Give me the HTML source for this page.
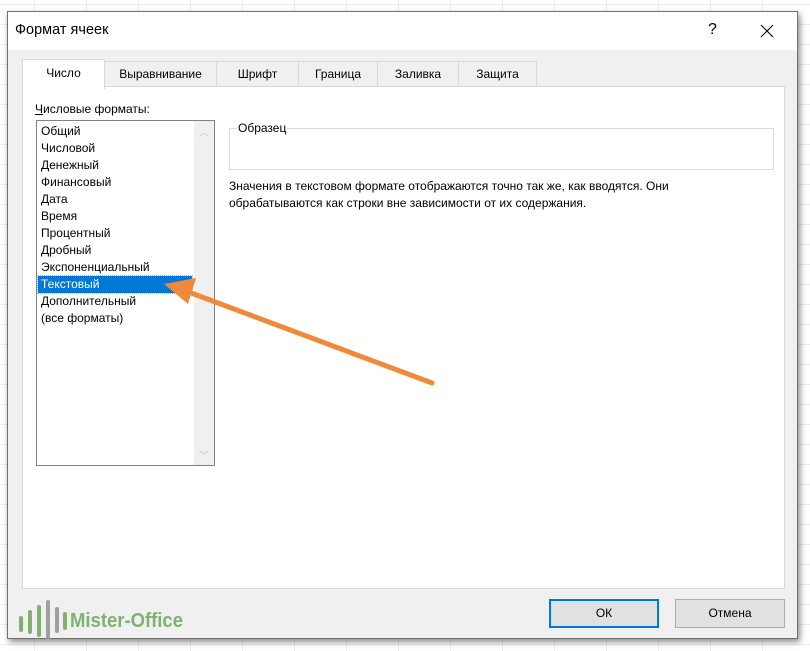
<!DOCTYPE html>
<html><head><meta charset="utf-8"><style>
*{margin:0;padding:0;box-sizing:border-box}
body{width:810px;height:651px;background:#fff;position:relative;overflow:hidden;font-family:"Liberation Sans",sans-serif;font-size:12px;color:#000}
.grid{position:absolute;inset:0;background-image:linear-gradient(90deg,#ececec 1px,transparent 1px),linear-gradient(#ececec 1px,transparent 1px);background-size:52px 20px;background-position:-18px 4px}
.dlg{position:absolute;left:7px;top:11px;width:791px;height:628px;background:#f0f0f0;border:1px solid #707070;box-shadow:2px 3px 6px rgba(0,0,0,.45)}
.title{position:absolute;left:0;top:0;right:0;height:38px;background:#fff}
.title .t{position:absolute;left:7px;top:10px;font-size:14.5px}
.title .q{position:absolute;left:700px;top:9px;font-size:16px}
.tab{position:absolute;top:49px;height:26px;border:1px solid #d9d9d9;border-bottom:none;background:#f0f0f0;text-align:center;line-height:24px;font-size:12px}
.tab.a{top:47px;height:30px;background:#fff;z-index:2;line-height:26px}
.panel{position:absolute;left:14px;top:74px;width:763px;height:503px;background:#fff;border:1px solid #d9d9d9}
.lbl{position:absolute;left:12px;top:15px}
.list{position:absolute;left:13px;top:33px;width:179px;height:346px;border:1px solid #828282;background:#fff}
.list .it{position:absolute;left:4px;line-height:17px}
.sel{position:absolute;left:1px;top:155px;width:154px;height:17px;background:#0078d7;outline:1px dotted #f5a04a;color:#fff;padding-left:3px;line-height:17px}
.sb{position:absolute;right:0;top:0;width:20px;height:344px;background:#f0f0f0}
.fs{position:absolute;left:206px;top:41px;width:545px;height:42px;border:1px solid #dcdcdc}
.fs span{position:absolute;left:7px;top:-8px;background:#fff;padding:0 1px}
.desc{position:absolute;left:206px;top:91px;line-height:17px}
.btn{position:absolute;top:587px;width:110px;height:29px;border:1px solid #adadad;background:#e1e1e1;text-align:center;line-height:27px}
.btn.ok{border:2px solid #0078d7;line-height:25px}
</style></head><body>
<div class="grid"></div>
<div class="dlg">
 <div class="title"><span class="t">Формат ячеек</span><span class="q">?</span>
  <svg style="position:absolute;left:752px;top:12px" width="14" height="14"><path d="M1 1L13 13M13 1L1 13" stroke="#000" stroke-width="1.1"/></svg></div>
 <div class="tab a" style="left:14px;width:83px">Число</div>
 <div class="tab" style="left:96px;width:113px">Выравнивание</div>
 <div class="tab" style="left:208px;width:83px">Шрифт</div>
 <div class="tab" style="left:290px;width:80px">Граница</div>
 <div class="tab" style="left:369px;width:82px">Заливка</div>
 <div class="tab" style="left:450px;width:79px">Защита</div>
 <div class="panel">
  <div class="lbl"><u>Ч</u>исловые форматы:</div>
  <div class="list">
   <div class="it" style="top:2px">Общий</div>
   <div class="it" style="top:19px">Числовой</div>
   <div class="it" style="top:36px">Денежный</div>
   <div class="it" style="top:53px">Финансовый</div>
   <div class="it" style="top:70px">Дата</div>
   <div class="it" style="top:87px">Время</div>
   <div class="it" style="top:104px">Процентный</div>
   <div class="it" style="top:121px">Дробный</div>
   <div class="it" style="top:138px">Экспоненциальный</div>
   <div class="sel">Текстовый</div>
   <div class="it" style="top:172px">Дополнительный</div>
   <div class="it" style="top:189px">(все форматы)</div>
   <div class="sb"><div style="position:absolute;left:5px;top:3px;color:#c0c0c0;font-size:10px">︿</div><div style="position:absolute;left:5px;top:326px;color:#c0c0c0;font-size:10px">﹀</div></div>
  </div>
  <div class="fs"><span>Образец</span></div>
  <div class="desc">Значения в текстовом формате отображаются точно так же, как вводятся. Они<br>обрабатываются как строки вне зависимости от их содержания.</div>
 </div>
 <div class="btn ok" style="left:541px">ОК</div>
 <div class="btn" style="left:667px">Отмена</div>
</div>
<svg style="position:absolute;left:0;top:0" width="810" height="651">
 <g fill="#7fb26e"><rect x="19" y="616" width="4" height="16" rx="2"/><rect x="28" y="610" width="4" height="24" rx="2"/><rect x="37" y="605" width="4" height="32" rx="2"/><rect x="46" y="600" width="4" height="40" rx="2" fill="#a0a0a0"/><rect x="55" y="607" width="4" height="26" rx="2" fill="#a0a0a0"/><rect x="63" y="612" width="4" height="18" rx="2"/></g>
 <text x="70" y="627" font-family="Liberation Sans" font-weight="bold" font-size="20" fill="#7fb26e" textLength="113" lengthAdjust="spacingAndGlyphs">Mister-Office</text>
 <line x1="432" y1="383" x2="186" y2="291" stroke="#f08a3a" stroke-width="5" stroke-linecap="round"/>
 <polygon points="164,284 196,278 188,304" fill="#f08a3a"/>
</svg>
</body></html>
